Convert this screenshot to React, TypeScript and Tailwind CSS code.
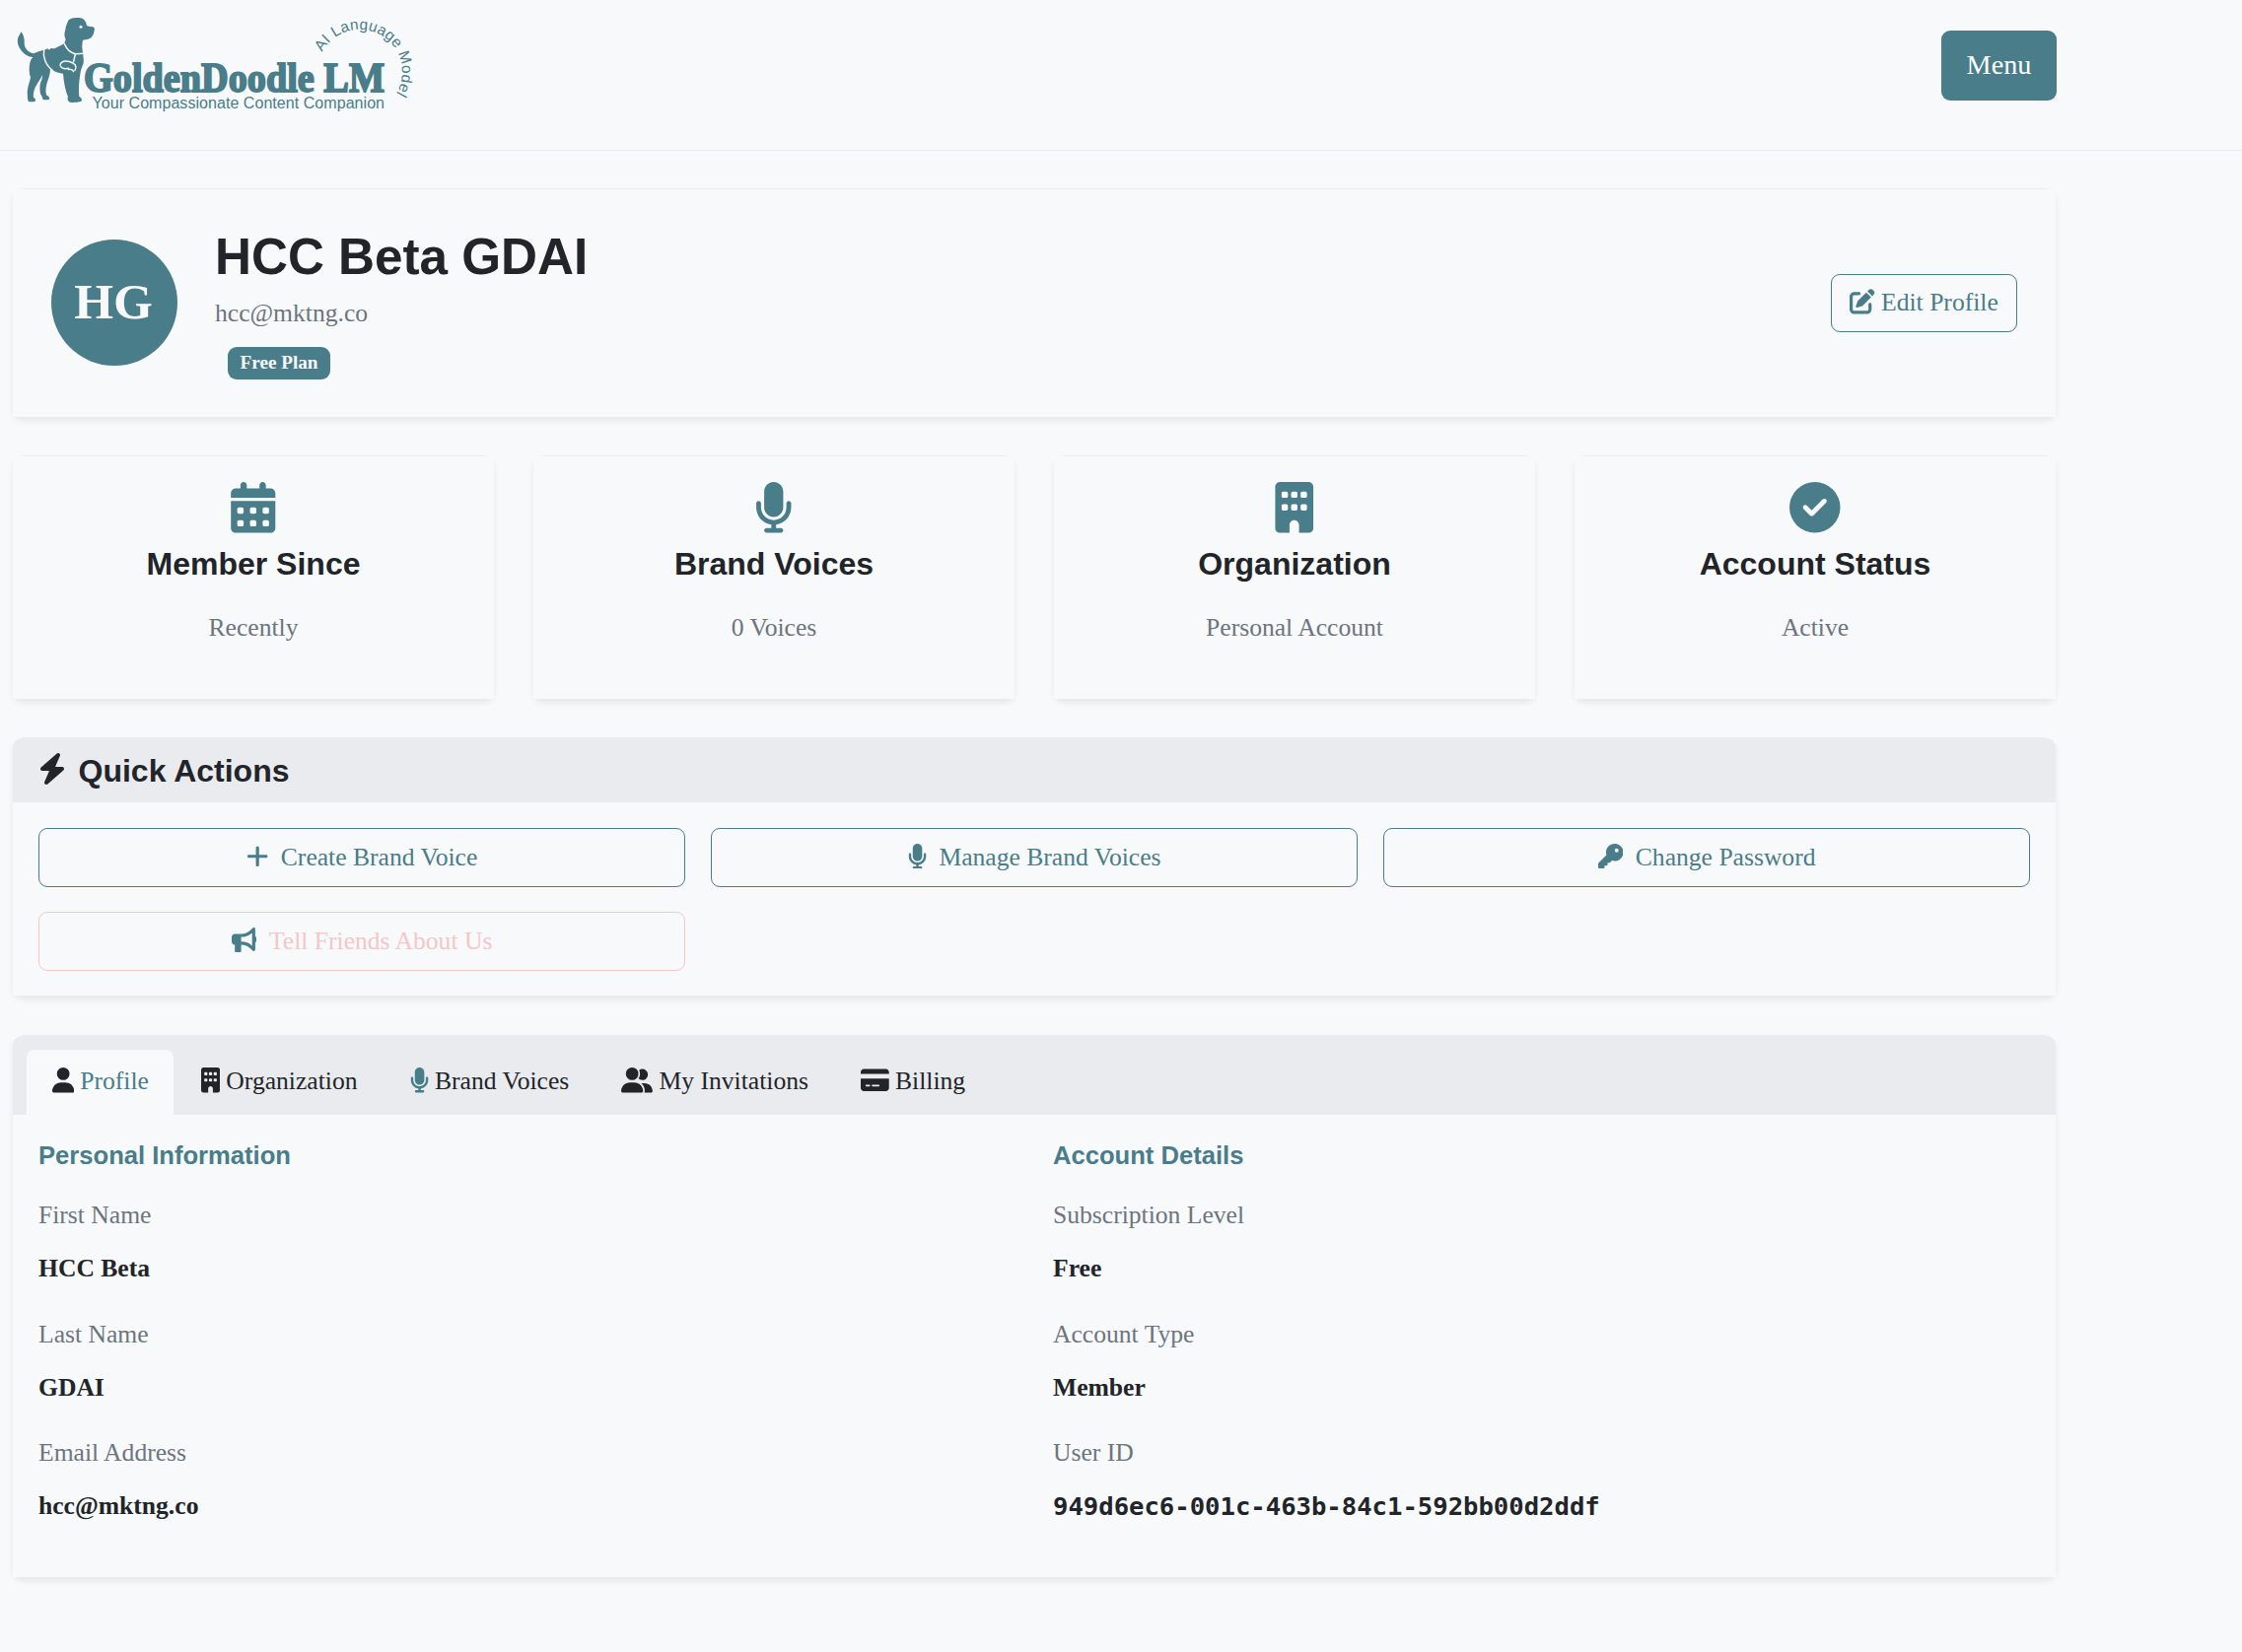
import React from "react";
import {
  FaBolt,
  FaBuilding,
  FaBullhorn,
  FaCalendarDays,
  FaCircleCheck,
  FaCreditCard,
  FaKey,
  FaMicrophone,
  FaPenToSquare,
  FaPlus,
  FaUser,
  FaUserGroup,
} from "react-icons/fa6";

// Rounded shadow behind a square-cornered fill, plus a hairline along the top edge.
const card =
  "relative isolate rounded-[9px] shadow-[0_-11px_0_-10px_#ebecee,0_3.25px_6.5px_rgba(0,0,0,0.075)] before:absolute before:inset-0 before:-z-10 before:bg-[#f8f9fb] before:content-['']";
const heading = "font-['Liberation_Sans',Arial,sans-serif] font-bold";

function Logo() {
  return (
    <svg width="440" height="130" viewBox="0 0 440 130" className="block text-[#487d89]" fill="currentColor">
      <g transform="scale(0.33333)">
        <path d="M65 97C74 110 75 122 74 135C77 150 88 160 102 163C112 158 122 155 134 152L145 148L150 152L154 147L166 148C178 141 188 138 196 132L200 120C194 108 197 97 199 90C200 78 205 70 208 62C215 54 228 54 240 54C254 54 262 64 264 78C272 82 282 80 287 84C289 92 285 98 284 104C280 112 276 118 264 120L252 122C249 136 249 150 253 164C252 172 256 182 254 192C251 202 246 210 245 220C242 240 238 262 241 294C248 297 251 303 247 309C236 311 222 313 213 311C206 309 204 302 207 295C199 276 194 250 192 224C176 222 164 217 153 210C153 228 146 242 142 256C139 270 138 282 142 290C150 293 152 298 149 303C142 304 134 304 130 302C129 296 126 290 123 286C121 274 120 260 124 250C128 242 129 236 128 228C124 242 112 254 107 266C103 276 100 288 102 297C108 299 110 305 106 309C98 310 90 310 86 308C83 300 84 290 83 280C84 264 90 250 93 236C88 222 88 205 91 192C92 184 96 178 100 174C84 174 68 160 60 146C52 134 52 118 57 110C61 106 61 100 65 97Z" />
        <g fill="none" stroke="#f8f9fb" strokeWidth="4.5" strokeLinecap="round">
          <path d="M134 152C130 172 138 198 160 214" />
          <path d="M196 134C204 152 216 162 230 164L254 163" />
          <path d="M229 165C227 172 226 180 224 187" />
          <path d="M183 197C188 182 208 184 222 192C232 198 233 206 228 214" />
          <path d="M184 201C188 209 198 210 208 208" />
          <path d="M208 212C214 208 222 214 224 218" />
        </g>
        <circle cx="246" cy="82" r="4.5" fill="#f8f9fb" />
      </g>
      <text
        x="85"
        y="92.5"
        textLength="305"
        lengthAdjust="spacingAndGlyphs"
        fontFamily="'Liberation Serif', serif"
        fontWeight="700"
        fontSize="43"
        stroke="currentColor"
        strokeWidth="1.9"
      >
        GoldenDoodle LM
      </text>
      <text
        x="93.5"
        y="110.3"
        textLength="296.5"
        fontFamily="'Liberation Sans', Arial, sans-serif"
        fontSize="16"
      >
        Your Compassionate Content Companion
      </text>
      <path id="logo-arc" d="M326.9 52.8A43 43 0 1 1 397.8 100.6" fill="none" />
      <text fontFamily="'Liberation Sans', Arial, sans-serif" fontSize="15.4">
        <textPath href="#logo-arc" textLength="137">
          AI Language Model
        </textPath>
      </text>
    </svg>
  );
}

const stats = [
  { Icon: FaCalendarDays, title: "Member Since", text: "Recently" },
  { Icon: FaMicrophone, title: "Brand Voices", text: "0 Voices" },
  { Icon: FaBuilding, title: "Organization", text: "Personal Account" },
  { Icon: FaCircleCheck, title: "Account Status", text: "Active" },
];

const actions = [
  { Icon: FaPlus, size: "w-[22.3px]", label: "Create Brand Voice" },
  { Icon: FaMicrophone, size: "w-[19.1px]", label: "Manage Brand Voices" },
  { Icon: FaKey, size: "w-[25.5px]", label: "Change Password" },
  { Icon: FaBullhorn, size: "w-[25.5px]", label: "Tell Friends About Us", pink: true },
];

const tabs = [
  { Icon: FaUser, size: "w-[22.3px]", label: "Profile", active: true },
  { Icon: FaBuilding, size: "w-[19.1px]", label: "Organization" },
  { Icon: FaMicrophone, size: "w-[19.1px]", label: "Brand Voices", teal: true },
  { Icon: FaUserGroup, size: "w-[31.9px]", label: "My Invitations" },
  { Icon: FaCreditCard, size: "w-[28.7px]", label: "Billing" },
];

const details = [
  {
    title: "Personal Information",
    fields: [
      { label: "First Name", value: "HCC Beta" },
      { label: "Last Name", value: "GDAI" },
      { label: "Email Address", value: "hcc@mktng.co" },
    ],
  },
  {
    title: "Account Details",
    fields: [
      { label: "Subscription Level", value: "Free" },
      { label: "Account Type", value: "Member" },
      { label: "User ID", value: "949d6ec6-001c-463b-84c1-592bb00d2ddf", mono: true },
    ],
  },
];

export default function App() {
  return (
    <div className="h-[1676px] w-[2274px] overflow-hidden bg-[#f8f9fb] font-['Liberation_Serif','Times_New_Roman',serif] text-[25.6px] leading-[38px] text-[#212529]">
      <header className="flex h-[153px] items-start justify-between border-b border-[#eaebee] pr-[188px]">
        <Logo />
        <button className="mt-[31px] h-[71px] w-[117px] rounded-[9px] bg-[#487d89] pb-[1px] text-[28.2px] text-white">
          Menu
        </button>
      </header>

      <main className="ml-[13px] flex w-[2072px] flex-col pt-[39px]">
        <section className={`${card} flex h-[231px] items-center pl-[39px] pr-[39px]`}>
          <div className="mb-[2px] flex h-32 w-32 items-center justify-center rounded-full bg-[#487d89] text-[51.2px] font-bold text-[#f8f9fb]">
            <span className="-ml-[2px] -mt-[2px]">HG</span>
          </div>
          <div className="ml-[38px] flex flex-1 flex-col items-start">
            <h1 className={`${heading} text-[51.2px] leading-[62px]`}>HCC Beta GDAI</h1>
            <p className="mt-[7px] text-[#6c757d]">hcc@mktng.co</p>
            <span className="mb-[1px] ml-[13px] mt-[15px] flex h-[33px] items-center rounded-[9px] bg-[#487d89] px-[12.5px] pb-[1px] text-[19.2px] font-bold leading-none text-[#f8f9fb]">
              Free Plan
            </span>
          </div>
          <button className="flex h-[59px] w-[189px] items-center justify-center gap-[6.4px] rounded-[9px] border border-[#487d89] text-[#487d89]">
            <FaPenToSquare className="mb-[3px] h-[25.5px] w-[25.5px]" />
            <span className="mb-[2px]">Edit Profile</span>
          </button>
        </section>

        <section className="mt-10 grid grid-cols-4 gap-x-10">
          {stats.map(({ Icon, title, text }) => (
            <div key={title} className={`${card} flex h-[246px] flex-col items-center pt-[26px]`}>
              <Icon className="size-[51.5px] text-[#487d89]" />
              <h5 className={`${heading} mt-3 text-[32px]`}>{title}</h5>
              <p className="mt-[27px] text-[#6c757d]">{text}</p>
            </div>
          ))}
        </section>

        <section className={`${card} mt-10 h-[261px]`}>
          <div className="flex h-[65px] items-center rounded-t-[9px] bg-[#eaebee] pl-[26px]">
            <FaBolt className="mb-[3px] h-8 w-7" />
            <h5 className={`${heading} ml-[12.5px] text-[32px]`}>Quick Actions</h5>
          </div>
          <div className="grid grid-cols-3 gap-x-[26px] gap-y-[25px] px-[26px] pt-[26px]">
            {actions.map(({ Icon, size, label, pink }) => (
              <button
                key={label}
                className={`flex h-[60px] items-center justify-center gap-[12.8px] rounded-[9px] border ${
                  pink ? "border-[#f5c6c6] text-[#f5c6c6]" : "border-[#487d89] text-[#487d89]"
                }`}
              >
                <Icon className={`mb-[3px] h-[25.5px] text-[#487d89] ${size}`} />
                <span className="mb-[1px]">{label}</span>
              </button>
            ))}
          </div>
        </section>

        <section className={`${card} mt-[41px] h-[549px]`}>
          <nav className="flex h-20 rounded-t-[9px] bg-[#eaebee] pl-[13px] pt-[13px]">
            {tabs.map(({ Icon, size, label, active, teal }) => (
              <a
                key={label}
                className={`flex items-center gap-[6.4px] rounded-t-[9px] border-x border-t border-[#eaebee] px-[25.5px] pb-[3px] ${
                  active ? "bg-[#f8f9fb] text-[#487d89]" : ""
                }`}
              >
                <Icon className={`mb-[1px] h-[25.5px] ${size} ${teal ? "text-[#487d89]" : "text-[#212529]"}`} />
                <span>{label}</span>
              </a>
            ))}
          </nav>
          <div className="grid grid-cols-2 gap-x-[38px] px-[26px] pt-[26px]">
            {details.map((group) => (
              <div key={group.title}>
                <h6 className={`${heading} text-[25.6px] leading-[30px] text-[#487d89]`}>{group.title}</h6>
                <dl className="mt-[27px]">
                  {group.fields.map(({ label, value, mono }) => (
                    <div key={label} className="mb-[28.5px]">
                      <dt className="text-[#6c757d]">{label}</dt>
                      <dd className={`mt-4 font-bold ${mono ? "font-['DejaVu_Sans_Mono',monospace]" : ""}`}>
                        {value}
                      </dd>
                    </div>
                  ))}
                </dl>
              </div>
            ))}
          </div>
        </section>
      </main>
    </div>
  );
}
